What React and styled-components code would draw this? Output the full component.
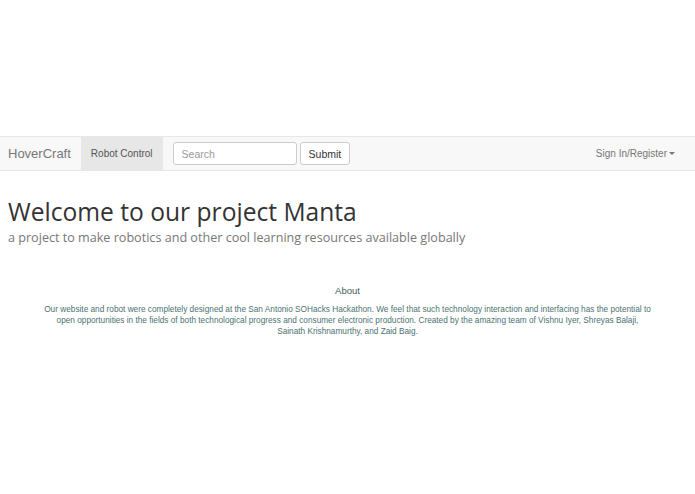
import styled, { createGlobalStyle } from "styled-components";

const GlobalStyle = createGlobalStyle`
  body {
    margin: 0;
    background: #fff;
    font-family: "Liberation Sans", Arial, sans-serif;
  }
`;

const Page = styled.div`
  padding-top: 136px;
`;

const Navbar = styled.nav`
  display: flex;
  align-items: center;
  height: 33px;
  background: #f8f8f8;
  border-top: 1px solid #e7e7e7;
  border-bottom: 1px solid #e7e7e7;
  padding: 0 10px 0 8px;
`;

const Brand = styled.span`
  font-size: 13px;
  color: #777;
  margin-right: 10px;
`;

const NavLink = styled.span`
  display: flex;
  align-items: center;
  height: 100%;
  padding: 0 10px;
  font-size: 10px;
  color: ${({ active }) => (active ? "#555" : "#777")};
  background: ${({ active }) => (active ? "#e7e7e7" : "transparent")};
`;

const SearchForm = styled.form`
  display: flex;
  gap: 3px;
  margin-left: 10px;
`;

const SearchInput = styled.input`
  width: 124px;
  height: 23px;
  box-sizing: border-box;
  border: 1px solid #ccc;
  border-radius: 3px;
  padding: 0 8px;
  font-family: "Liberation Sans", Arial, sans-serif;
  font-size: 10.5px;
  color: #555;
  background: #fff;
  &::placeholder {
    color: #999;
  }
`;

const Button = styled.button`
  height: 23px;
  padding: 0 8px;
  border: 1px solid #ccc;
  border-radius: 3px;
  background: #fff;
  font-family: "Liberation Sans", Arial, sans-serif;
  font-size: 10.5px;
  color: #333;
`;

const Spacer = styled.div`
  flex: 1;
`;

const Caret = styled.span`
  display: inline-block;
  width: 0;
  height: 0;
  margin-left: 2px;
  vertical-align: middle;
  border-top: 3px solid #777;
  border-left: 3px solid transparent;
  border-right: 3px solid transparent;
`;

const Hero = styled.header`
  padding: 0 8px;
  font-family: "Open Sans", sans-serif;
`;

const Title = styled.h1`
  margin: 25px 0 0;
  font-size: 24.6px;
  font-weight: 400;
  line-height: 32px;
  color: #333;
`;

const Subtitle = styled.p`
  margin: 0;
  font-size: 12.6px;
  line-height: 20px;
  color: #777;
`;

const About = styled.section`
  max-width: 611px;
  margin: 37px auto 0;
  text-align: center;
  color: #4b7272;
`;

const AboutTitle = styled.h4`
  margin: 0 0 8px;
  font-size: 9.5px;
  font-weight: 400;
  line-height: 11px;
  color: #3f5b5b;
`;

const AboutText = styled.p`
  margin: 0;
  font-size: 8.25px;
  line-height: 11px;
`;

export default function App() {
  return (
    <Page>
      <GlobalStyle />
      <Navbar>
        <Brand>HoverCraft</Brand>
        <NavLink active>Robot Control</NavLink>
        <SearchForm onSubmit={(e) => e.preventDefault()}>
          <SearchInput placeholder="Search" />
          <Button type="submit">Submit</Button>
        </SearchForm>
        <Spacer />
        <NavLink>
          Sign In/Register
          <Caret />
        </NavLink>
      </Navbar>
      <Hero>
        <Title>Welcome to our project Manta</Title>
        <Subtitle>
          a project to make robotics and other cool learning resources available globally
        </Subtitle>
      </Hero>
      <About>
        <AboutTitle>About</AboutTitle>
        <AboutText>
          Our website and robot were completely designed at the San Antonio SOHacks Hackathon. We feel that such
          technology interaction and interfacing has the potential to open opportunities in the fields of both
          technological progress and consumer electronic production. Created by the amazing team of Vishnu Iyer,
          Shreyas Balaji, Sainath Krishnamurthy, and Zaid Baig.
        </AboutText>
      </About>
    </Page>
  );
}
